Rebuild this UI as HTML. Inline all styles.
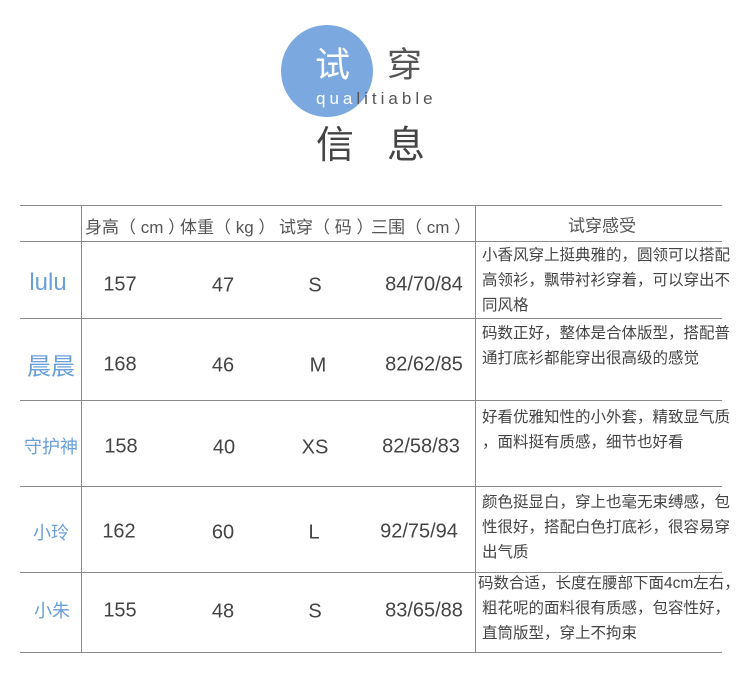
<!DOCTYPE html>
<html><head><meta charset="utf-8"><style>
body{margin:0;width:750px;height:680px;background:#fff;position:relative;overflow:hidden;font-family:"Liberation Sans","Noto Sans CJK SC",sans-serif;color:#444}
.a{position:absolute;white-space:nowrap}
.h{position:absolute;left:20px;width:702px;height:1px;background:#8a8a8a}
.v{position:absolute;top:205px;width:1px;height:447px;background:#8a8a8a}
.c{position:absolute;transform:translate(-50%,-50%);white-space:nowrap}
.n{font-size:20px;color:#444}
.nm{color:#6a9fd9}
.d{position:absolute;left:482px;font-size:15.5px;line-height:25px;color:#444;white-space:nowrap}
.hd{font-size:17px;color:#555}
</style></head><body>
<div class="a" style="left:281px;top:25px;width:92px;height:92px;border-radius:50%;background:#7aa8df"></div>
<div class="a" style="left:315px;top:46px;font-size:35px;color:#fff;line-height:40px">试</div>
<div class="a" style="left:387px;top:46px;font-size:35px;color:#555;line-height:40px">穿</div>
<div class="a" style="left:316px;top:88px;font-size:17px;letter-spacing:4px;line-height:22px;color:#555"><span style="color:#fff">qua</span><span style="color:#555">litiable</span></div>
<div class="a" style="left:316px;top:124px;font-size:38px;color:#444;line-height:44px;letter-spacing:33px">信息</div>
<div class="h" style="top:205px"></div>
<div class="h" style="top:241px"></div>
<div class="h" style="top:318px"></div>
<div class="h" style="top:400px"></div>
<div class="h" style="top:486px"></div>
<div class="h" style="top:572px"></div>
<div class="h" style="top:652px"></div>
<div class="v" style="left:81px"></div>
<div class="v" style="left:475px"></div>
<div class="a hd" style="left:85px;top:213px">身高</div>
<div class="a hd" style="left:119px;top:213px">（ cm ）</div>
<div class="a hd" style="left:180px;top:213px">体重</div>
<div class="a hd" style="left:214px;top:213px">（ kg ）</div>
<div class="a hd" style="left:279px;top:213px">试穿</div>
<div class="a hd" style="left:313px;top:213px">（ 码 ）</div>
<div class="a hd" style="left:371px;top:213px">三围</div>
<div class="a hd" style="left:405px;top:213px">（ cm ）</div>
<div class="c hd" style="left:602px;top:224px">试穿感受</div>

<div class="c nm" style="left:48px;top:283px;font-size:24px">lulu</div>
<div class="c nm" style="left:51px;top:364px;font-size:24px">晨晨</div>
<div class="c nm" style="left:51px;top:446px;font-size:18px">守护神</div>
<div class="c nm" style="left:51px;top:532px;font-size:18px">小玲</div>
<div class="c nm" style="left:52px;top:610px;font-size:18px">小朱</div>

<div class="c n" style="left:120px;top:285px">157</div><div class="c n" style="left:223px;top:286px">47</div><div class="c n" style="left:315px;top:286px">S</div><div class="c n" style="left:424px;top:285px">84/70/84</div>
<div class="c n" style="left:120px;top:365px">168</div><div class="c n" style="left:223px;top:366px">46</div><div class="c n" style="left:318px;top:366px">M</div><div class="c n" style="left:424px;top:365px">82/62/85</div>
<div class="c n" style="left:121px;top:447px">158</div><div class="c n" style="left:224px;top:448px">40</div><div class="c n" style="left:315px;top:448px">XS</div><div class="c n" style="left:421px;top:447px">82/58/83</div>
<div class="c n" style="left:119px;top:532px">162</div><div class="c n" style="left:223px;top:533px">60</div><div class="c n" style="left:314px;top:533px">L</div><div class="c n" style="left:419px;top:532px">92/75/94</div>
<div class="c n" style="left:120px;top:611px">155</div><div class="c n" style="left:223px;top:612px">48</div><div class="c n" style="left:315px;top:612px">S</div><div class="c n" style="left:424px;top:611px">83/65/88</div>

<div class="d" style="top:243px">小香风穿上挺典雅的，圆领可以搭配<br>高领衫，飘带衬衫穿着，可以穿出不<br>同风格</div>
<div class="d" style="top:321px">码数正好，整体是合体版型，搭配普<br>通打底衫都能穿出很高级的感觉</div>
<div class="d" style="top:405px">好看优雅知性的小外套，精致显气质<br>，面料挺有质感，细节也好看</div>
<div class="d" style="top:490px">颜色挺显白，穿上也毫无束缚感，包<br>性很好，搭配白色打底衫，很容易穿<br>出气质</div>
<div class="d" style="top:571px;left:478px">码数合适，长度在腰部下面4cm左右，<br><span style="margin-left:4px">粗花呢的面料很有质感，包容性好，</span><br><span style="margin-left:4px">直筒版型，穿上不拘束</span></div>
</body></html>
